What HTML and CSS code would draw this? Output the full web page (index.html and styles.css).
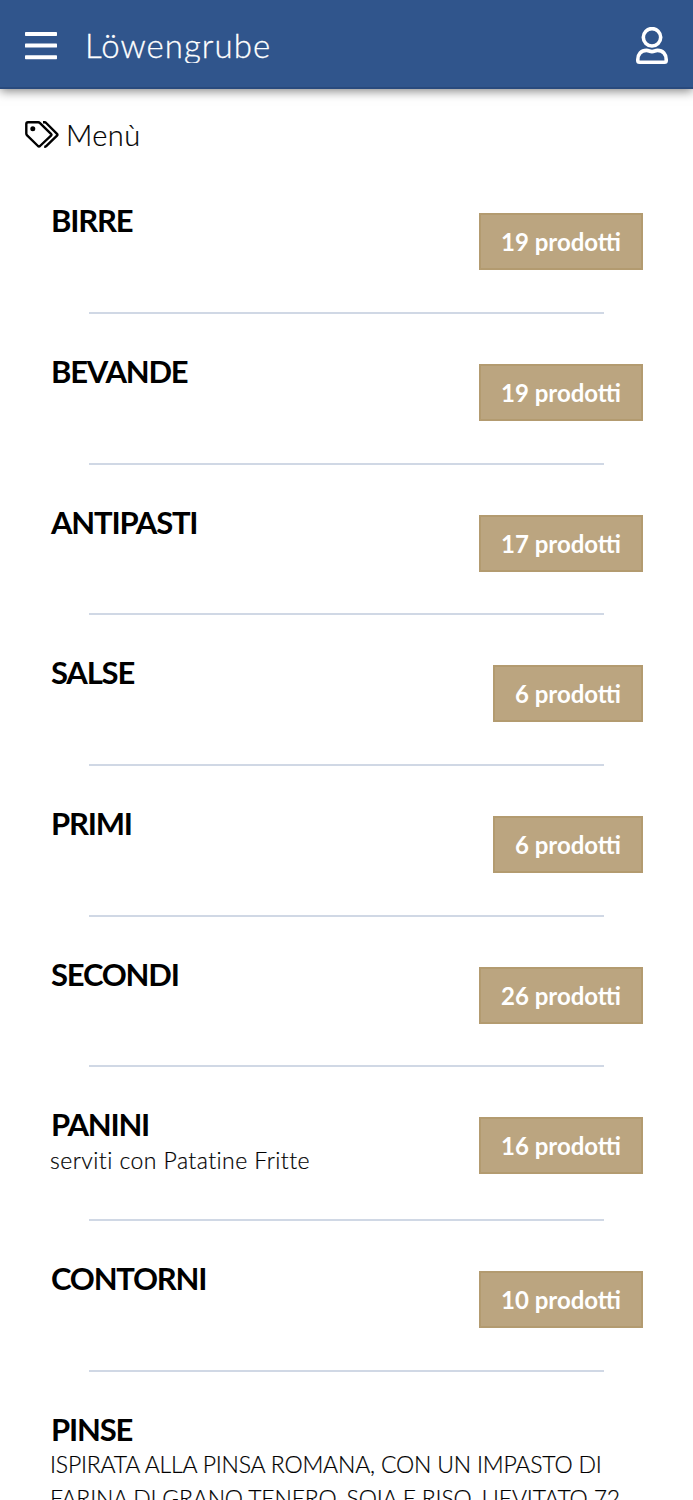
FILE: index.html
```
<!DOCTYPE html>
<html lang="it">
<head>
    <meta charset="UTF-8">
    <meta name="viewport" content="width=device-width, initial-scale=1.0">
    <title>Löwengrube</title>
    <link rel="stylesheet" href="styles.css">
</head>
<body>
<header class="navbar">
    <svg class="icon-menu" viewBox="0 0 32 28" fill="#fff">
        <rect width="32" height="4" rx="0.7"/>
        <rect y="11.6" width="32" height="4" rx="0.7"/>
        <rect y="23.2" width="32" height="4" rx="0.7"/>
    </svg>
    <span class="brand">Löwengrube</span>
    <svg class="icon-user" viewBox="0 0 32 37" fill="none" stroke="#fff" stroke-width="3.6" stroke-linejoin="round">
        <circle cx="16" cy="10.3" r="8.7"/>
        <path d="M10.5 23.4 C13 23.4 13.5 24.6 16 24.6 S19 23.4 21.5 23.4 C27 23.4 30.2 27.5 30.2 32.5 V33.5 Q30.2 35.2 28.5 35.2 H3.5 Q1.8 35.2 1.8 33.5 V32.5 C1.8 27.5 5 23.4 10.5 23.4 Z"/>
    </svg>
</header>

<main>
    <h1 class="page-title">
        <svg class="icon-tags" viewBox="0 0 34 27" fill="none" stroke="#000" stroke-width="2.4" stroke-linejoin="round">
            <path d="M3 1.3 H13.2 Q14.2 1.3 15 2.1 L26 12.8 Q26.9 13.7 26 14.6 L15 25 Q14 25.9 13 25 L2.1 14.4 Q1.3 13.6 1.3 12.6 V3 Q1.3 1.3 3 1.3 Z"/>
            <circle cx="7.8" cy="7.8" r="2.5" fill="#000" stroke="none"/>
            <path d="M18 1.2 H19.6 Q20.5 1.2 21.2 2 L32 12.8 Q32.9 13.7 32 14.6 L21.2 25.2 Q20.5 25.9 19.2 25.9"/>
        </svg>
        <span>Menù</span>
    </h1>

    <ul class="menu">
        <li class="category">
            <div class="info">
                <h2>BIRRE</h2>
            </div>
            <a class="btn">19 prodotti</a>
        </li>
        <li class="category">
            <div class="info">
                <h2>BEVANDE</h2>
            </div>
            <a class="btn">19 prodotti</a>
        </li>
        <li class="category">
            <div class="info">
                <h2>ANTIPASTI</h2>
            </div>
            <a class="btn">17 prodotti</a>
        </li>
        <li class="category">
            <div class="info">
                <h2>SALSE</h2>
            </div>
            <a class="btn">6 prodotti</a>
        </li>
        <li class="category">
            <div class="info">
                <h2>PRIMI</h2>
            </div>
            <a class="btn">6 prodotti</a>
        </li>
        <li class="category">
            <div class="info">
                <h2>SECONDI</h2>
            </div>
            <a class="btn">26 prodotti</a>
        </li>
        <li class="category">
            <div class="info">
                <h2>PANINI</h2>
                <p>serviti con Patatine Fritte</p>
            </div>
            <a class="btn">16 prodotti</a>
        </li>
        <li class="category">
            <div class="info">
                <h2>CONTORNI</h2>
            </div>
            <a class="btn">10 prodotti</a>
        </li>
        <li class="category">
            <div class="info">
                <h2>PINSE</h2>
                <p class="upper">ISPIRATA ALLA PINSA ROMANA, CON UN IMPASTO DI<br>FARINA DI GRANO TENERO, SOIA E RISO, LIEVITATO 72</p>
            </div>
        </li>
    </ul>
</main>
</body>
</html>
```
FILE: styles.css
```
* {
    box-sizing: border-box;
}
html, body {
    height: 100%;
}
body {
    margin: 0;
    overflow: hidden;
    background-color: #fff;
    color: #000;
    font-family: "Century Gothic", Lato, sans-serif;
}
.navbar {
    display: flex;
    align-items: center;
    height: 89px;
    padding: 4px 25px 0;
    background-color: #30558c;
    border-bottom: 2px solid #294a7d;
    box-shadow: 0 2px 10px rgba(0, 0, 0, 0.5);
}
.icon-menu {
    width: 32px;
    height: 28px;
}
.brand {
    height: 34px;
    margin-left: 28px;
    overflow: hidden;
    color: #fff;
    font-size: 33px;
    font-weight: 300;
    line-height: 33px;
    letter-spacing: 1.05px;
    -webkit-text-stroke: 0.3px #fff;
}
.icon-user {
    width: 32px;
    height: 37px;
    margin-left: auto;
}
.page-title {
    display: flex;
    align-items: center;
    gap: 7px;
    height: 40px;
    margin: 25px 25px 0;
    font-size: 29px;
    font-weight: 300;
    letter-spacing: 0.4px;
    -webkit-text-stroke: 0.2px #000;
}
.icon-tags {
    width: 34px;
    height: 27px;
}
.menu {
    margin: 9.3px 0 0;
    padding: 0;
    list-style: none;
}
.category {
    position: relative;
    display: flex;
    justify-content: space-between;
    align-items: flex-start;
    padding: 39px 50px 43.67px;
}
/* Separator between categories */
.category::after {
    content: "";
    position: absolute;
    left: 89px;
    right: 89px;
    bottom: 0;
    height: 2px;
    background-color: #d0d8e5;
}
.info h2 {
    margin: 0 0 0 1px;
    font-size: 31px;
    font-weight: 700;
    line-height: 36.67px;
    letter-spacing: -1.2px;
}
.info p {
    margin: 0;
    padding-bottom: 0.3px;
    font-size: 23px;
    font-weight: 300;
    line-height: 34px;
    letter-spacing: 0.45px;
    white-space: nowrap;
    -webkit-text-stroke: 0.2px #000;
}
.info p.upper {
    letter-spacing: -0.2px;
}
.btn {
    height: 57px;
    margin-top: 11px;
    padding: 0 20px;
    border: 2px solid #b39b70;
    background-color: #bba580;
    color: #fff;
    font-size: 24px;
    font-weight: 700;
    line-height: 53px;
    white-space: nowrap;
}
```
